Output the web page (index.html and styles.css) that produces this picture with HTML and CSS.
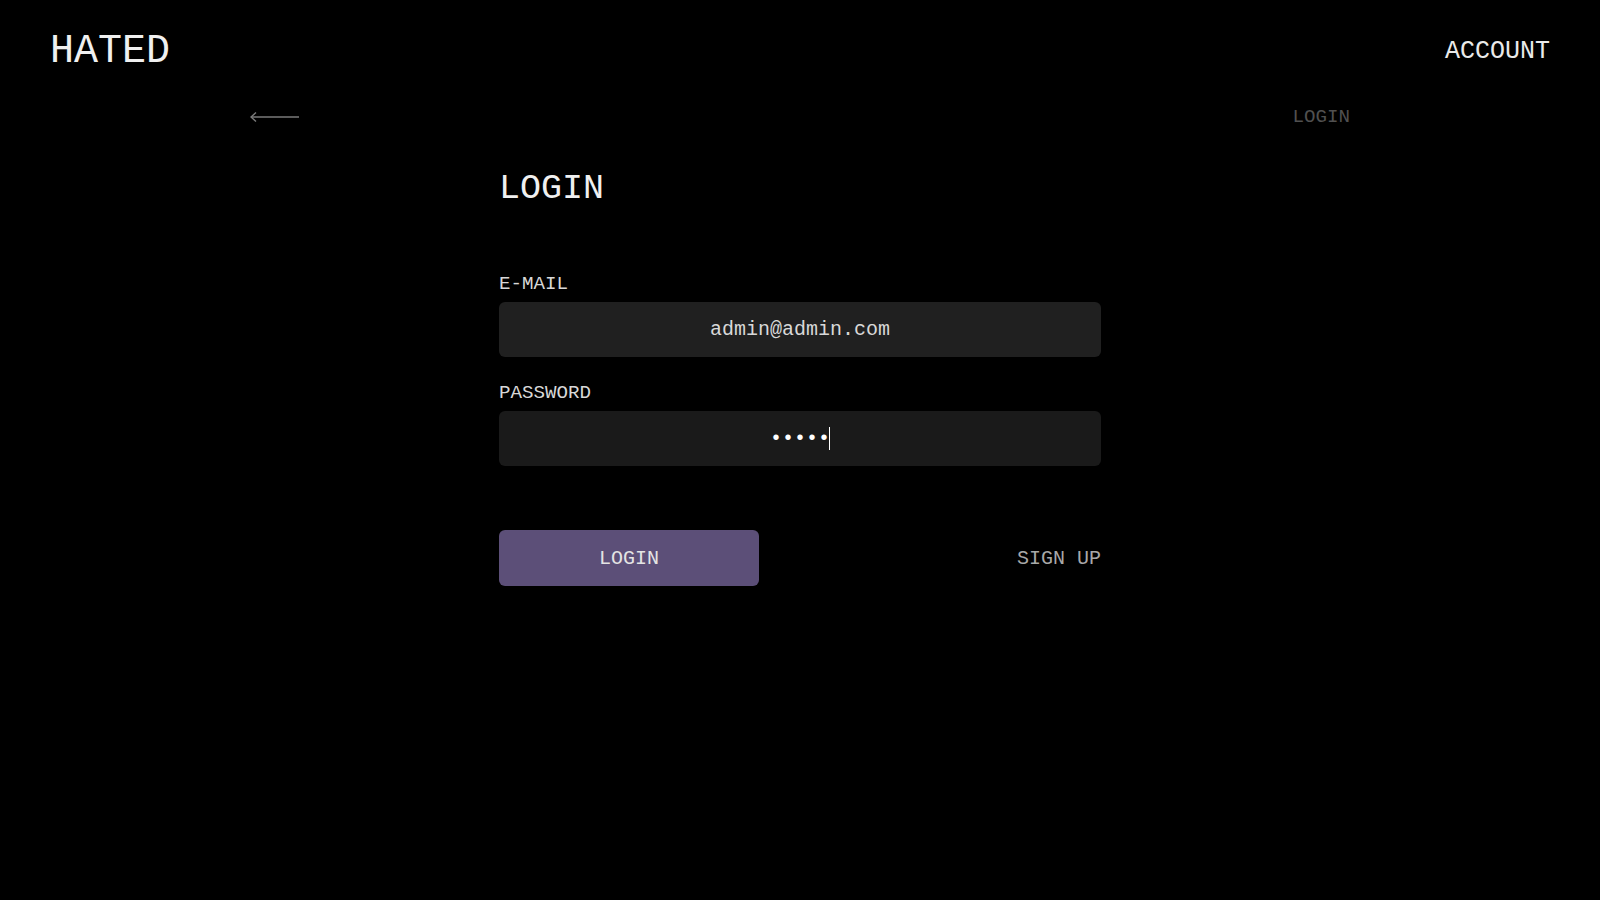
FILE: index.html
```html
<!DOCTYPE html>
<html lang="en">
<head>
<meta charset="utf-8">
<title>HATED — Login</title>
<link rel="stylesheet" href="styles.css">
</head>
<body>
<header class="site-header">
  <a class="logo" href="#">HATED</a>
  <a class="account" href="#">ACCOUNT</a>
</header>
<nav class="subnav">
  <a class="back" href="#" aria-label="Back">
    <svg width="50" height="12" viewBox="0 0 50 12" fill="none" stroke="#7a7a7a" stroke-width="1.4">
      <line x1="1" y1="6" x2="49" y2="6"/>
      <polyline points="6,1.5 1,6 6,10.5"/>
    </svg>
  </a>
  <span class="crumb">LOGIN</span>
</nav>
<main class="form-wrap">
  <h1 class="title">LOGIN</h1>
  <form class="form">
    <label class="label" for="email">E-MAIL</label>
    <input class="field field-email" id="email" type="text" value="admin@admin.com">
    <label class="label" for="password">PASSWORD</label>
    <div class="pass-wrap">
      <input class="field field-pass" id="password" type="password" value="12345" autofocus>
      <span class="caret" aria-hidden="true"></span>
    </div>
    <div class="actions">
      <button class="btn-login" type="button">LOGIN</button>
      <a class="signup" href="#">SIGN UP</a>
    </div>
  </form>
</main>
</body>
</html>
```
FILE: styles.css
```css
* { box-sizing: border-box; }
html, body { margin: 0; padding: 0; }
body {
  background: #000;
  color: #eee;
  font-family: "Liberation Mono", "Courier New", monospace;
  min-height: 900px;
}
a { text-decoration: none; color: inherit; }

.site-header {
  height: 102px;
  padding: 0 50px;
  display: flex;
  align-items: center;
  justify-content: space-between;
}
.logo { font-size: 40px; color: #f0f0f0; }
.account { font-size: 25px; color: #eaeaea; }

.subnav {
  width: 1100px;
  margin: 0 auto;
  height: 30px;
  display: flex;
  align-items: center;
  justify-content: space-between;
}
.back { display: flex; align-items: center; }
.back svg { display: block; }
.crumb { font-size: 19.2px; color: #505050; }

.form-wrap {
  width: 602px;
  margin: 0 auto;
}
.title {
  margin: 36px 0 0;
  font-weight: normal;
  font-size: 35px;
  line-height: 42px;
  color: #f0f0f0;
}
.form {
  display: flex;
  flex-direction: column;
  margin-top: 63px;
}
.label {
  font-size: 19.2px;
  line-height: 23px;
  color: #d8d8d8;
  margin-bottom: 6px;
}
.field {
  width: 100%;
  height: 55px;
  border: none;
  border-radius: 6px;
  outline: none;
  text-align: center;
  font-family: inherit;
  font-size: 20px;
  color: #d8d8d8;
  padding: 0 16px;
}
.field-email { background: #202020; margin-bottom: 25px; }
.pass-wrap { position: relative; }
.field-pass { display: block; background: #1a1a1a; caret-color: transparent; color: #fff; }
.caret {
  position: absolute;
  left: 330px;
  top: 16px;
  width: 1px;
  height: 23px;
  background: #fff;
}

.actions {
  margin-top: 64px;
  display: flex;
  align-items: center;
  justify-content: space-between;
}
.btn-login {
  width: 260px;
  height: 56px;
  border: none;
  border-radius: 6px;
  background: #5c4f78;
  color: #e4e4e4;
  font-family: inherit;
  font-size: 20px;
  cursor: pointer;
}
.signup { font-size: 20px; color: #a8a8a8; }
```
